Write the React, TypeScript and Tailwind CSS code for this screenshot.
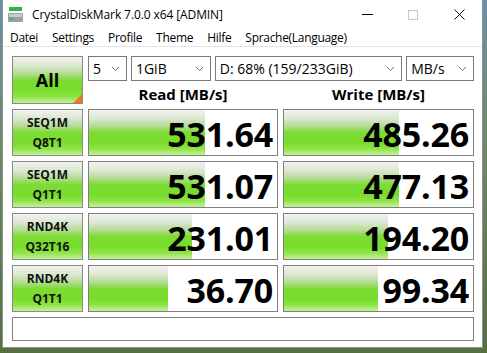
import React from "react";

const font = { fontFamily: '"Open Sans", "Noto Sans", sans-serif' };

const rows = [
  { l1: "SEQ1M", l2: "Q8T1", read: "531.64", rp: 61.5, write: "485.26", wp: 61 },
  { l1: "SEQ1M", l2: "Q1T1", read: "531.07", rp: 61.5, write: "477.13", wp: 61 },
  { l1: "RND4K", l2: "Q32T16", read: "231.01", rp: 55, write: "194.20", wp: 55 },
  { l1: "RND4K", l2: "Q1T1", read: "36.70", rp: 42, write: "99.34", wp: 49.5 },
];

const green =
  "bg-[linear-gradient(to_bottom,#f2f2f0_0%,#dde8d4_18%,#b4dc94_36%,#7ddc34_50%,#76dc2a_72%,#8ee446_86%,#c6f0a0_100%)]";

function Chevron() {
  return (
    <svg width="9" height="6" viewBox="0 0 9 6" className="shrink-0">
      <polyline points="1,1 4.5,4.5 8,1" fill="none" stroke="#6a6a6a" strokeWidth="1" />
    </svg>
  );
}

function Combo({ text, w }: { text: string; w: string }) {
  return (
    <div className={`${w} h-[25px] border border-[#7a7a7a] bg-white flex items-center justify-between pl-[4px] pr-[6px]`}>
      <span className="text-[14px] text-black leading-none">{text}</span>
      <Chevron />
    </div>
  );
}

function Bar({ pct, value }: { pct: number; value: string }) {
  return (
    <div className="relative h-[47px] border border-[#808080] bg-white overflow-hidden">
      <div className={`absolute left-0 top-0 bottom-0 ${green}`} style={{ width: `${pct}%` }} />
      <div className="relative h-full flex items-center justify-end pr-[4px] pt-[3px]">
        <span className="text-[34px] font-bold text-black leading-none tracking-[-0.2px]">{value}</span>
      </div>
    </div>
  );
}

export default function App() {
  return (
    <div className="w-[487px] h-[353px] bg-[linear-gradient(to_bottom,#6e8ea8_0%,#6f8a62_40%,#55703c_100%)] overflow-hidden" style={font}>
      <div className="ml-[2px] w-[481px] h-[348px] bg-white border-x border-b border-[#8894a0] flex flex-col">
        {/* title bar */}
        <div className="h-[29px] flex items-center shrink-0">
          <svg width="18" height="16" viewBox="0 0 18 16" className="ml-[4px] mr-[7px]">
            <rect x="2" y="0" width="13" height="4" fill="#2fb33a" />
            <rect x="1" y="6" width="15" height="9" rx="1" fill="#9aa0a4" />
            <rect x="2" y="7" width="13" height="3" fill="#c8ccce" />
            <rect x="3" y="11" width="3" height="2" fill="#36c040" />
          </svg>
          <span className="text-[12px] text-black tracking-[-0.1px]">CrystalDiskMark 7.0.0 x64 [ADMIN]</span>
          <div className="ml-auto flex h-full">
            <div className="w-[46px] flex items-center justify-center">
              <div className="w-[11px] h-px bg-black" />
            </div>
            <div className="w-[46px] flex items-center justify-center">
              <div className="w-[10px] h-[10px] border border-[#c4c4c4]" />
            </div>
            <div className="w-[46px] flex items-center justify-center">
              <svg width="11" height="11" viewBox="0 0 11 11">
                <path d="M0.5 0.5 L10.5 10.5 M10.5 0.5 L0.5 10.5" stroke="#111" strokeWidth="1" />
              </svg>
            </div>
          </div>
        </div>
        {/* menu bar */}
        <div className="h-[17px] flex items-center text-[12px] text-black tracking-[-0.3px] shrink-0">
          {["Datei", "Settings", "Profile", "Theme", "Hilfe", "Sprache(Language)"].map((m) => (
            <span key={m} className="px-[7px] leading-none">{m}</span>
          ))}
        </div>
        <div className="h-px bg-[#e4e4e4] shrink-0" />
        {/* main */}
        <div className="pl-[9px] pr-[8px] pt-[9px] flex flex-col gap-[5px]">
          <div className="grid grid-cols-[71px_190px_191px] gap-x-[5px]">
            <div className={`relative h-[48px] border border-[#8a8a8a] ${green} flex items-center justify-center`}>
              <span className="text-[18px] font-bold text-black">All</span>
              <div className="absolute right-0 bottom-0 w-0 h-0 border-l-[9px] border-l-transparent border-b-[9px] border-b-[#f47a14]" />
            </div>
            <div className="col-span-2 flex flex-col">
              <div className="flex gap-[4px]">
                <Combo text="5" w="w-[39px]" />
                <Combo text="1GiB" w="w-[80px]" />
                <Combo text="D: 68% (159/233GiB)" w="w-[188px]" />
                <Combo text="MB/s" w="w-[68px]" />
              </div>
              <div className="grid grid-cols-[190px_191px] gap-x-[5px] flex-1">
                <div className="flex items-end justify-center text-[15px] font-bold text-black leading-[20px]">Read [MB/s]</div>
                <div className="flex items-end justify-center text-[15px] font-bold text-black leading-[20px]">Write [MB/s]</div>
              </div>
            </div>
          </div>
          {rows.map((r, i) => (
            <div key={i} className="grid grid-cols-[71px_190px_191px] gap-x-[5px]">
              <div className={`h-[47px] border border-[#8a8a8a] ${green} flex flex-col items-center justify-center text-[12px] font-bold text-[#111] leading-[20px]`}>
                <span>{r.l1}</span>
                <span>{r.l2}</span>
              </div>
              <Bar pct={r.rp} value={r.read} />
              <Bar pct={r.wp} value={r.write} />
            </div>
          ))}
          <div className="h-[24px] border border-[#808080] bg-white" />
        </div>
      </div>
    </div>
  );
}
